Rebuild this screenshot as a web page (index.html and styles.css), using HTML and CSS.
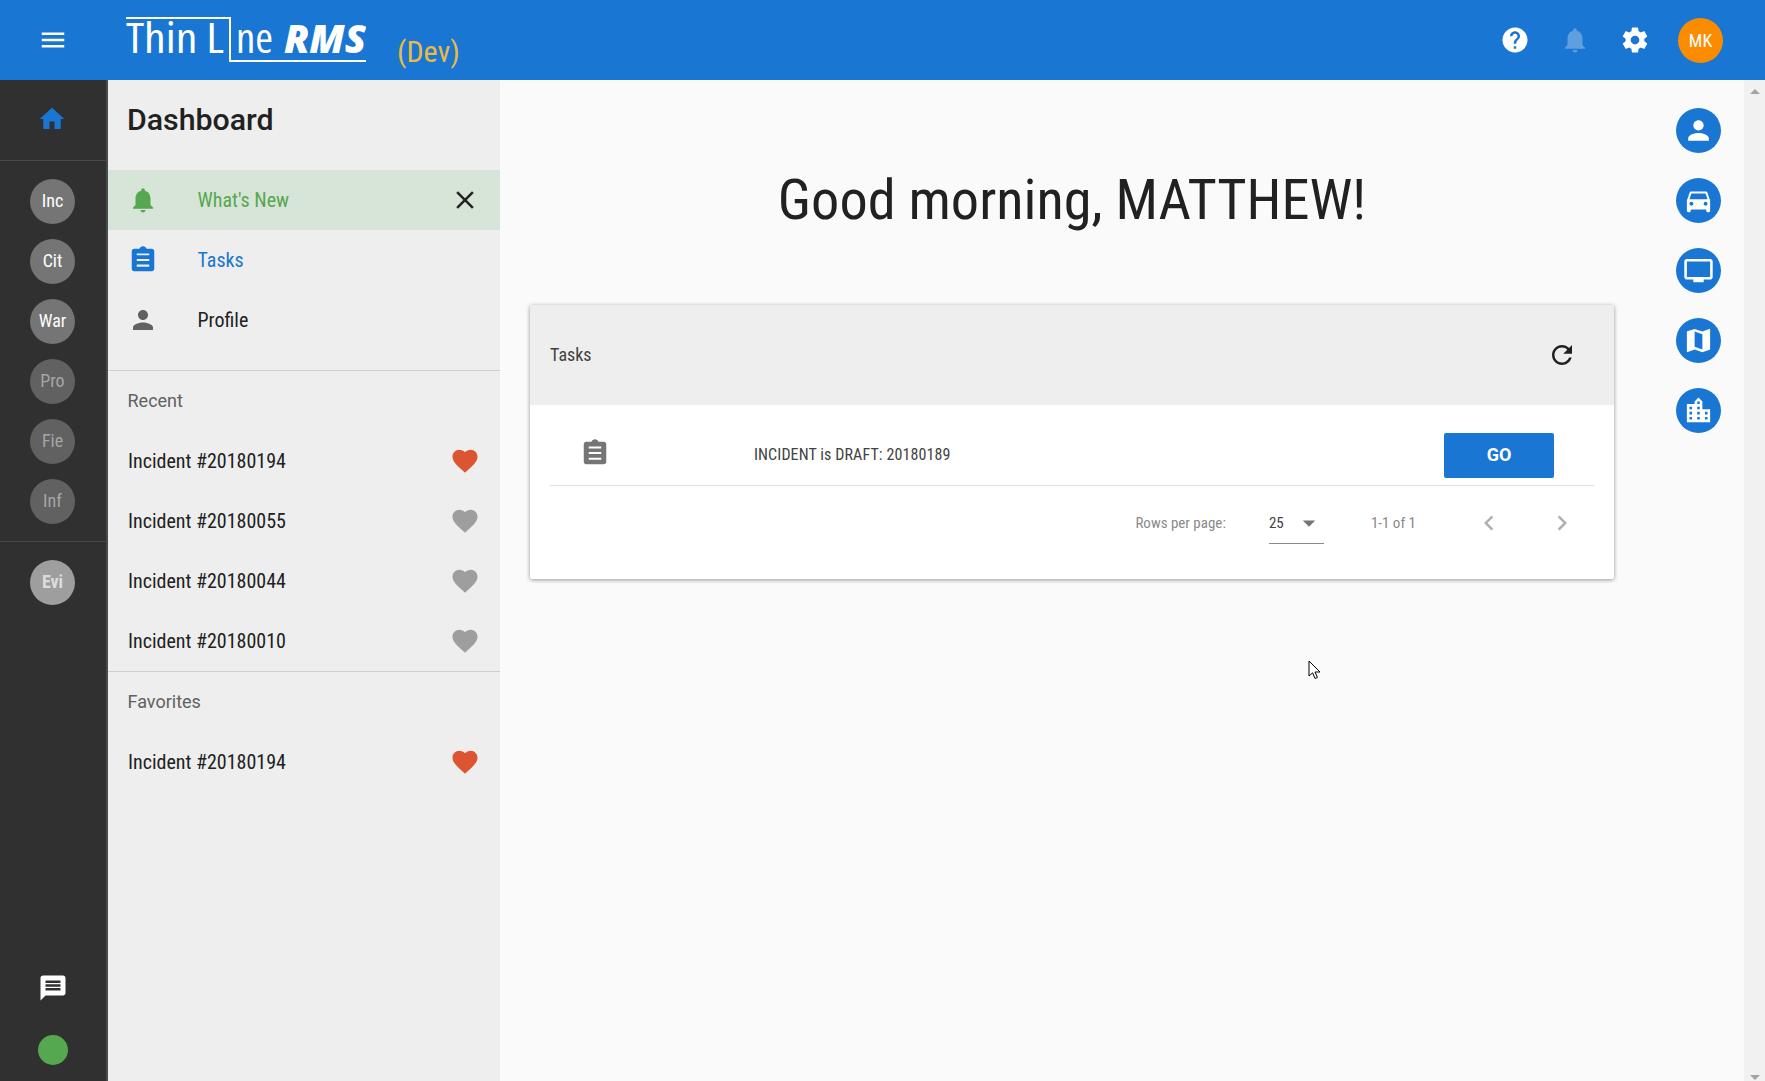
FILE: index.html
```html
<!DOCTYPE html>
<html lang="en">
<head>
    <meta charset="UTF-8">
    <meta name="viewport" content="width=device-width, initial-scale=1.0">
    <title>Thin Line RMS</title>
    <link rel="stylesheet" href="styles.css">
</head>
<body>
    <svg class="sprite" aria-hidden="true">
        <symbol id="i-menu" viewBox="0 0 24 24"><path d="M3 18h18v-2H3v2zm0-5h18v-2H3v2zm0-7v2h18V6H3z"/></symbol>
        <symbol id="i-home" viewBox="0 0 24 24"><path d="M10 20v-6h4v6h5v-8h3L12 3 2 12h3v8z"/></symbol>
        <symbol id="i-bell" viewBox="0 0 24 24"><path d="M12 22c1.1 0 2-.9 2-2h-4c0 1.1.89 2 2 2zm6-6v-5c0-3.07-1.64-5.64-4.5-6.32V4c0-.83-.67-1.5-1.5-1.5s-1.5.67-1.5 1.5v.68C7.63 5.36 6 7.92 6 11v5l-2 2v1h16v-1l-2-2z"/></symbol>
        <symbol id="i-task" viewBox="0 0 24 24"><path d="M19 3h-4.18C14.4 1.84 13.3 1 12 1c-1.3 0-2.4.84-2.82 2H5c-1.1 0-2 .9-2 2v14c0 1.1.9 2 2 2h14c1.1 0 2-.9 2-2V5c0-1.1-.9-2-2-2zm-2 14.3H7v-1.6h10v1.6zm0-4.5H7v-1.6h10v1.6zm0-4.5H7V6.7h10v1.6z"/></symbol>
        <symbol id="i-person" viewBox="0 0 24 24"><path d="M12 12c2.21 0 4-1.79 4-4s-1.79-4-4-4-4 1.79-4 4 1.79 4 4 4zm0 2c-2.67 0-8 1.34-8 4v2h16v-2c0-2.66-5.33-4-8-4z"/></symbol>
        <symbol id="i-close" viewBox="0 0 24 24"><path d="M19 6.41L17.59 5 12 10.59 6.41 5 5 6.41 10.59 12 5 17.59 6.41 19 12 13.41 17.59 19 19 17.59 13.41 12z"/></symbol>
        <symbol id="i-heart" viewBox="0 0 24 24"><path d="M12 21.35l-1.45-1.32C5.4 15.36 2 12.28 2 8.5 2 5.42 4.42 3 7.5 3c1.74 0 3.41.81 4.5 2.09C13.09 3.81 14.76 3 16.5 3 19.58 3 22 5.42 22 8.5c0 3.78-3.4 6.86-8.55 11.54L12 21.35z"/></symbol>
        <symbol id="i-help" viewBox="0 0 24 24"><path d="M12 2C6.48 2 2 6.48 2 12s4.48 10 10 10 10-4.48 10-10S17.52 2 12 2zm1 17h-2v-2h2v2zm2.07-7.75l-.9.92C13.45 12.9 13 13.5 13 15h-2v-.5c0-1.1.45-2.1 1.17-2.83l1.24-1.26c.37-.36.59-.86.59-1.41 0-1.1-.9-2-2-2s-2 .9-2 2H8c0-2.21 1.79-4 4-4s4 1.79 4 4c0 .88-.36 1.68-.93 2.25z"/></symbol>
        <symbol id="i-gear" viewBox="0 0 24 24"><path d="M19.43 12.98c.04-.32.07-.64.07-.98s-.03-.66-.07-.98l2.11-1.65c.19-.15.24-.42.12-.64l-2-3.46c-.12-.22-.39-.3-.61-.22l-2.49 1c-.52-.4-1.08-.73-1.69-.98l-.38-2.65C14.46 2.18 14.25 2 14 2h-4c-.25 0-.46.18-.49.42l-.38 2.65c-.61.25-1.17.59-1.69.98l-2.49-1c-.23-.09-.49 0-.61.22l-2 3.46c-.13.22-.07.49.12.64l2.11 1.65c-.04.32-.07.65-.07.98s.03.66.07.98l-2.11 1.65c-.19.15-.24.42-.12.64l2 3.46c.12.22.39.3.61.22l2.49-1c.52.4 1.08.73 1.69.98l.38 2.65c.03.24.24.42.49.42h4c.25 0 .46-.18.49-.42l.38-2.65c.61-.25 1.17-.59 1.69-.98l2.49 1c.23.09.49 0 .61-.22l2-3.46c.12-.22.07-.49-.12-.64l-2.11-1.65zM12 15.5c-1.93 0-3.5-1.57-3.5-3.5s1.57-3.5 3.5-3.5 3.5 1.57 3.5 3.5-1.57 3.5-3.5 3.5z"/></symbol>
        <symbol id="i-car" viewBox="0 0 24 24"><path d="M18.92 6.01C18.72 5.42 18.16 5 17.5 5h-11c-.66 0-1.21.42-1.42 1.01L3 12v8c0 .55.45 1 1 1h1c.55 0 1-.45 1-1v-1h12v1c0 .55.45 1 1 1h1c.55 0 1-.45 1-1v-8l-2.08-5.99zM6.5 16c-.83 0-1.5-.67-1.5-1.5S5.67 13 6.5 13s1.5.67 1.5 1.5S7.33 16 6.5 16zm11 0c-.83 0-1.5-.67-1.5-1.5s.67-1.5 1.5-1.5 1.5.67 1.5 1.5-.67 1.5-1.5 1.5zM5 11l1.5-4.5h11L19 11H5z"/></symbol>
        <symbol id="i-tv" viewBox="0 0 24 24"><path d="M21 3H3c-1.1 0-2 .9-2 2v12c0 1.1.9 2 2 2h5v2h8v-2h5c1.1 0 1.99-.9 1.99-2L23 5c0-1.1-.9-2-2-2zm0 14H3V5h18v12z"/></symbol>
        <symbol id="i-map" viewBox="0 0 24 24"><path d="M20.5 3l-.16.03L15 5.1 9 3 3.36 4.9c-.21.07-.36.25-.36.48V20.5c0 .28.22.5.5.5l.16-.03L9 18.9l6 2.1 5.64-1.9c.21-.07.36-.25.36-.48V3.5c0-.28-.22-.5-.5-.5zM15 19l-6-2.11V5l6 2.11V19z"/></symbol>
        <symbol id="i-city" viewBox="0 0 24 24"><path d="M15 11V5l-3-3-3 3v2H3v14h18V11h-6zm-8 8H5v-2h2v2zm0-4H5v-2h2v2zm0-4H5V9h2v2zm6 8h-2v-2h2v2zm0-4h-2v-2h2v2zm0-4h-2V9h2v2zm0-4h-2V5h2v2zm6 12h-2v-2h2v2zm0-4h-2v-2h2v2z"/></symbol>
        <symbol id="i-refresh" viewBox="0 0 24 24"><path d="M17.65 6.35C16.2 4.9 14.21 4 12 4c-4.42 0-7.99 3.58-7.99 8s3.57 8 7.99 8c3.73 0 6.84-2.55 7.73-6h-2.08c-.82 2.33-3.04 4-5.65 4-3.31 0-6-2.69-6-6s2.69-6 6-6c1.66 0 3.14.69 4.22 1.78L13 11h7V4l-2.35 2.35z"/></symbol>
        <symbol id="i-chat" viewBox="0 0 24 24"><path d="M20 2H4c-1.1 0-1.99.9-1.99 2L2 22l4-4h14c1.1 0 2-.9 2-2V4c0-1.1-.9-2-2-2zm-2 12H6v-2h12v2zm0-3H6V9h12v2zm0-3H6V6h12v2z"/></symbol>
        <symbol id="i-left" viewBox="0 0 24 24"><path d="M15.41 7.41L14 6l-6 6 6 6 1.41-1.41L10.83 12z"/></symbol>
        <symbol id="i-right" viewBox="0 0 24 24"><path d="M10 6L8.59 7.41 13.17 12l-4.58 4.59L10 18l6-6z"/></symbol>
        <symbol id="i-drop" viewBox="0 0 24 24"><path d="M7 10l5 5 5-5z"/></symbol>
    </svg>

    <header class="topbar">
        <button class="menu-btn"><svg class="icon icon-30"><use href="#i-menu"/></svg></button>
        <svg class="logo" width="240" height="80" viewBox="0 0 240 80">
            <path class="logo-line" d="M0 18H104V61H240"/>
            <text class="logo-thin" x="0" y="53" textLength="98" lengthAdjust="spacingAndGlyphs">Thin L</text>
            <text class="logo-thin" x="110" y="53" textLength="37" lengthAdjust="spacingAndGlyphs">ne</text>
            <text class="logo-bold" x="158" y="53" textLength="82" lengthAdjust="spacingAndGlyphs">RMS</text>
        </svg>
        <span class="env">(Dev)</span>
        <div class="top-actions">
            <svg class="icon icon-30"><use href="#i-help"/></svg>
            <svg class="icon icon-30 dim"><use href="#i-bell"/></svg>
            <svg class="icon icon-30"><use href="#i-gear"/></svg>
            <span class="avatar">MK</span>
        </div>
    </header>

    <div class="layout">
        <nav class="rail">
            <div class="rail-home"><svg class="icon icon-30"><use href="#i-home"/></svg></div>
            <div class="rail-group">
                <span class="bubble">Inc</span>
                <span class="bubble">Cit</span>
                <span class="bubble">War</span>
                <span class="bubble off">Pro</span>
                <span class="bubble off">Fie</span>
                <span class="bubble off">Inf</span>
            </div>
            <div class="rail-group last">
                <span class="bubble light">Evi</span>
            </div>
            <div class="rail-chat"><svg class="icon icon-30"><use href="#i-chat"/></svg></div>
            <span class="status-dot"></span>
        </nav>

        <aside class="panel">
            <h2 class="panel-title">Dashboard</h2>
            <ul class="nav-list">
                <li class="nav-item news">
                    <svg class="icon icon-30"><use href="#i-bell"/></svg>
                    <span class="nav-label">What's New</span>
                    <svg class="icon icon-30 close"><use href="#i-close"/></svg>
                </li>
                <li class="nav-item tasks">
                    <svg class="icon icon-30"><use href="#i-task"/></svg>
                    <span class="nav-label">Tasks</span>
                </li>
                <li class="nav-item profile">
                    <svg class="icon icon-30"><use href="#i-person"/></svg>
                    <span class="nav-label">Profile</span>
                </li>
            </ul>
            <section class="side-section">
                <h3 class="side-head">Recent</h3>
                <div class="side-row"><span>Incident #20180194</span><svg class="icon icon-30 fav"><use href="#i-heart"/></svg></div>
                <div class="side-row"><span>Incident #20180055</span><svg class="icon icon-30"><use href="#i-heart"/></svg></div>
                <div class="side-row"><span>Incident #20180044</span><svg class="icon icon-30"><use href="#i-heart"/></svg></div>
                <div class="side-row"><span>Incident #20180010</span><svg class="icon icon-30"><use href="#i-heart"/></svg></div>
            </section>
            <section class="side-section plain">
                <h3 class="side-head">Favorites</h3>
                <div class="side-row"><span>Incident #20180194</span><svg class="icon icon-30 fav"><use href="#i-heart"/></svg></div>
            </section>
        </aside>

        <main class="content">
            <h1 class="greeting">Good morning, MATTHEW!</h1>
            <div class="card">
                <div class="card-head">
                    <span class="card-title">Tasks</span>
                    <svg class="icon icon-30"><use href="#i-refresh"/></svg>
                </div>
                <div class="card-body">
                    <div class="task-row">
                        <svg class="icon icon-30 task-icon"><use href="#i-task"/></svg>
                        <span class="task-text">INCIDENT is DRAFT: 20180189</span>
                        <button class="go-btn">GO</button>
                    </div>
                    <div class="pager">
                        <span class="pager-label">Rows per page:</span>
                        <span class="pager-select">25<svg class="icon icon-30"><use href="#i-drop"/></svg></span>
                        <span class="pager-label pager-count">1-1 of 1</span>
                        <svg class="icon icon-30 pager-arrow"><use href="#i-left"/></svg>
                        <svg class="icon icon-30 pager-arrow"><use href="#i-right"/></svg>
                    </div>
                </div>
            </div>
        </main>

        <div class="fabs">
            <span class="fab"><svg class="icon icon-31"><use href="#i-person"/></svg></span>
            <span class="fab"><svg class="icon icon-31"><use href="#i-car"/></svg></span>
            <span class="fab"><svg class="icon icon-31"><use href="#i-tv"/></svg></span>
            <span class="fab"><svg class="icon icon-31"><use href="#i-map"/></svg></span>
            <span class="fab"><svg class="icon icon-31"><use href="#i-city"/></svg></span>
        </div>

        <div class="scrollbar">
            <span class="scroll-up"></span>
            <span class="scroll-down"></span>
        </div>
    </div>

    <svg class="cursor" width="14" height="21" viewBox="0 0 14 21"><path d="M1 1V16L4.6 12.8 7 18.5 9.4 17.4 7 12H12z" fill="#fff" stroke="#000"/></svg>
</body>
</html>
```

FILE: styles.css
```css
* {
    box-sizing: border-box;
}
html, body {
    height: 100%;
    margin: 0;
    overflow: hidden;
}
body {
    display: flex;
    flex-direction: column;
    font-family: "Roboto Condensed", "Liberation Sans Narrow", Roboto, sans-serif;
    font-stretch: 75%;
    background-color: #fafafa;
    color: #212121;
}
h1, h2, h3, ul {
    margin: 0;
    padding: 0;
    font-weight: 400;
}
.sprite {
    display: none;
}
.icon {
    display: block;
    flex: none;
    fill: currentColor;
}
.icon-30 {
    width: 30px;
    height: 30px;
}
.icon-31 {
    width: 31px;
    height: 31px;
}

/* top bar */
.topbar {
    flex: none;
    display: flex;
    align-items: center;
    height: 80px;
    background-color: #1976d2;
    color: #fff;
}
.menu-btn {
    display: flex;
    justify-content: center;
    width: 106px;
    padding: 0;
    border: 0;
    background: none;
    color: inherit;
}
.logo {
    margin-left: 20px;
}
.logo-line {
    fill: none;
    stroke: #fff;
    stroke-width: 2;
}
.logo-thin {
    font-family: "Open Sans", sans-serif;
    font-stretch: 75%;
    font-size: 41px;
    font-weight: 400;
    fill: #fff;
}
.logo-bold {
    font-family: "Open Sans", sans-serif;
    font-stretch: 100%;
    font-size: 39px;
    font-weight: 800;
    font-style: italic;
    fill: #fff;
}
.env {
    margin: 22px 0 0 31px;
    font-size: 30px;
    color: #e9bb45;
}
.top-actions {
    display: flex;
    align-items: center;
    gap: 30px;
    margin-left: auto;
    margin-right: 42px;
}
.dim {
    opacity: 0.3;
}
.avatar {
    display: flex;
    align-items: center;
    justify-content: center;
    width: 45px;
    height: 45px;
    margin-left: -2px;
    border-radius: 50%;
    background-color: #fb8c00;
    font-size: 18px;
}

.layout {
    flex: 1;
    display: flex;
    min-height: 0;
}

/* dark rail */
.rail {
    flex: none;
    display: flex;
    flex-direction: column;
    align-items: center;
    width: 108px;
    background-color: #303030;
    border-right: 2px solid #4a4a4a;
}
.rail-home {
    display: flex;
    align-items: center;
    justify-content: center;
    width: 106px;
    height: 81px;
    padding: 0 2px 2px 0;
    color: #1976d2;
    border-bottom: 1px solid #4a4a4a;
}
.rail-group {
    display: flex;
    flex-direction: column;
    gap: 15px;
    align-items: center;
    width: 106px;
    padding: 18px 1px 17px 0;
    border-bottom: 1px solid #4a4a4a;
}
.rail-group.last {
    border-bottom: 0;
}
.bubble {
    display: flex;
    align-items: center;
    justify-content: center;
    width: 45px;
    height: 45px;
    padding-bottom: 2px;
    border-radius: 50%;
    background-color: #757575;
    color: #fff;
    font-size: 18px;
}
.bubble.off {
    background-color: #616161;
    color: #a6a6a6;
}
.bubble.light {
    background-color: #9e9e9e;
    color: #dcdcdc;
    font-weight: 700;
}
.rail-chat {
    margin-top: auto;
    margin-right: 1px;
    color: #fff;
}
.status-dot {
    width: 30px;
    height: 30px;
    margin: 32px 0 16px;
    border-radius: 50%;
    background-color: #55a84f;
}

/* dashboard panel */
.panel {
    flex: none;
    width: 392px;
    background-color: #eeeeee;
    font-size: 20px;
}
.panel-title {
    display: flex;
    align-items: center;
    height: 90px;
    padding: 0 0 12px 19px;
    font-family: Roboto, sans-serif;
    font-stretch: 100%;
    font-size: 30.3px;
    font-weight: 500;
}
.nav-list {
    list-style: none;
}
.nav-item {
    display: flex;
    align-items: center;
    height: 60px;
    padding-left: 20px;
}
.nav-label {
    margin-left: 39.5px;
}
.news {
    background-color: #d7e4d8;
    color: #55a84f;
}
.close {
    margin-left: auto;
    margin-right: 20px;
    color: #212121;
}
.tasks {
    color: #1976d2;
}
.profile .icon {
    color: #616161;
}
.side-section {
    margin-top: 20px;
    border-top: 1px solid #cfcfcf;
}
.side-section.plain {
    margin-top: 0;
}
.side-head {
    height: 60px;
    padding-left: 19.5px;
    font-family: Roboto, sans-serif;
    font-stretch: 100%;
    font-size: 18px;
    line-height: 59px;
    color: #616161;
}
.side-row {
    display: flex;
    align-items: center;
    justify-content: space-between;
    height: 60px;
    padding: 0 20px;
}
.side-row .icon {
    color: #9e9e9e;
}
.side-row .fav {
    color: #dc5530;
}

/* main area */
.content {
    flex: 1;
    padding: 0 30px;
}
.greeting {
    height: 225px;
    padding-top: 85px;
    text-align: center;
    font-size: 56.3px;
    line-height: 70px;
}
.card {
    border-radius: 2px;
    background-color: #fff;
    box-shadow: 0 1px 4px rgba(0,0,0,0.4);
}
.card-head {
    display: flex;
    align-items: center;
    justify-content: space-between;
    height: 100px;
    padding: 0 37px 0 20px;
    background-color: #eeeeee;
    font-size: 18px;
}
.card-title {
    margin-bottom: 2px;
    color: #424242;
}
.card-body {
    height: 174px;
    padding: 0 20px;
}
.task-row {
    display: flex;
    align-items: center;
    height: 81px;
    padding-top: 20px;
    border-bottom: 1px solid #e0e0e0;
    font-size: 16px;
}
.task-icon {
    margin-left: 30px;
    margin-bottom: 5px;
    color: #757575;
}
.task-text {
    margin-left: 144px;
    margin-bottom: 2px;
    letter-spacing: 0.1px;
    color: #424242;
}
.go-btn {
    width: 110px;
    height: 45px;
    margin-left: auto;
    margin-right: 40px;
    padding-bottom: 2px;
    border: 0;
    border-radius: 2px;
    background-color: #1976d2;
    color: #fff;
    font-family: Roboto, sans-serif;
    font-size: 18px;
    font-weight: 700;
}
.pager {
    display: flex;
    align-items: center;
    justify-content: flex-end;
    height: 93px;
    padding: 0 17px 19px 0;
    font-size: 15px;
}
.pager-label {
    color: #8a8a8a;
}
.pager-select {
    display: flex;
    align-items: center;
    justify-content: space-between;
    width: 55px;
    height: 40px;
    margin: 2px 0 0 43px;
    padding-bottom: 1px;
    border-bottom: 1px solid #8a8a8a;
    color: #424242;
}
.pager-select .icon {
    color: #757575;
}
.pager-count {
    margin-left: 47px;
    margin-right: 58px;
}
.pager-arrow {
    color: #b0b0b0;
    margin-left: 43px;
}
.pager-count + .pager-arrow {
    margin-left: 0;
}

/* round shortcuts */
.fabs {
    flex: none;
    display: flex;
    flex-direction: column;
    gap: 25px;
    width: 100px;
    padding: 28px 0 0 32px;
}
.fab {
    display: flex;
    align-items: center;
    justify-content: center;
    width: 45px;
    height: 45px;
    border-radius: 50%;
    background-color: #1976d2;
    color: #fff;
}

.scrollbar {
    flex: none;
    display: flex;
    flex-direction: column;
    justify-content: space-between;
    align-items: center;
    width: 21px;
    padding: 9px 0 1px;
    background-color: #f1f1f1;
}
.scroll-up, .scroll-down {
    border-left: 5px solid transparent;
    border-right: 5px solid transparent;
}
.scroll-up {
    border-bottom: 5px solid #a3a3a3;
}
.scroll-down {
    border-top: 5px solid #a3a3a3;
}

.cursor {
    position: absolute;
    left: 1308px;
    top: 660px;
}
```
